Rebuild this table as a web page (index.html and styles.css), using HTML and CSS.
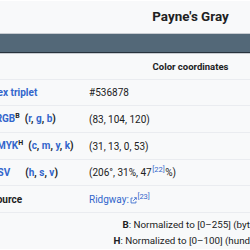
FILE: index.html
```html
<!DOCTYPE html>
<html lang="en">
<head>
<meta charset="utf-8">
<title>Payne's Gray</title>
<link rel="stylesheet" href="styles.css">
</head>
<body>
<div class="page">
  <div class="infobox">
    <div class="title">Payne's Gray</div>
    <div class="swatch"></div>
    <div class="head">Color coordinates</div>
    <div class="row">
      <div class="label"><a href="#">Hex triplet</a></div>
      <div class="value">#536878</div>
    </div>
    <div class="row tall">
      <div class="label"><a href="#">sRGB</a><sup class="note">B</sup>&nbsp;&nbsp;(<a href="#">r</a>, <a href="#">g</a>, <a href="#">b</a>)</div>
      <div class="value">(83, 104, 120)</div>
    </div>
    <div class="row tall">
      <div class="label"><a href="#">CMYK</a><sup class="note">H</sup>&nbsp;&nbsp;(<a href="#">c</a>, <a href="#">m</a>, <a href="#">y</a>, <a href="#">k</a>)</div>
      <div class="value">(31, 13, 0, 53)</div>
    </div>
    <div class="row">
      <div class="label"><a href="#">HSV</a>&nbsp;&nbsp;&nbsp;&nbsp;&nbsp;&nbsp;(<a href="#">h</a>, <a href="#">s</a>, <a href="#">v</a>)</div>
      <div class="value">(206°, 31%, 47<sup class="ref"><a href="#">[22]</a></sup>%)</div>
    </div>
    <div class="row tall">
      <div class="label">Source</div>
      <div class="value"><a href="#" class="ext">Ridgway:<svg class="ext-icon" viewBox="0 0 10 10" width="7" height="7" aria-hidden="true"><path d="M4 1.5H1.5v7h7V6" fill="none" stroke="#3366cc" stroke-width="1.2"/><path d="M6 1h3v3M9 1L4.5 5.5" fill="none" stroke="#3366cc" stroke-width="1.2"/></svg></a><sup class="ref"><a href="#">[23]</a></sup></div>
    </div>
    <div class="foot">
      <div><b>B</b>: Normalized to [0–255] (byte)</div>
      <div><b>H</b>: Normalized to [0–100] (hundred)</div>
    </div>
  </div>
</div>
</body>
</html>
```
FILE: styles.css
```css
html, body {
  margin: 0;
  padding: 0;
  overflow: hidden;
  background: #ffffff;
}
.page {
  width: 250px;
  height: 250px;
  overflow: hidden;
  padding-top: 1px;
  box-sizing: border-box;
}
.infobox {
  margin-left: -11px;
  width: 403px;
  background: #f8f9fa;
  color: #202122;
  font-family: Roboto, "Liberation Sans", sans-serif;
  font-size: 10px;
}
a {
  color: #3366cc;
  text-decoration: none;
}
.title {
  height: 32px;
  line-height: 32px;
  text-align: center;
  font-weight: bold;
  font-size: 13.4px;
  border-bottom: 1px solid #c8ccd1;
}
.swatch {
  height: 18px;
  background: #536878;
  border-bottom: 1px solid #27323c;
}
.head {
  height: 25px;
  line-height: 25px;
  text-align: center;
  font-weight: bold;
  font-size: 9.5px;
  border-top: 1px solid #c8ccd1;
}
.row {
  display: grid;
  grid-template-columns: 96px 1fr;
  align-items: center;
  height: 25px;
  border-top: 1px solid #eaecf0;
}
.row.tall {
  height: 26px;
}
.label {
  padding-left: 1.5px;
  font-weight: bold;
  white-space: nowrap;
}
.value {
  padding-left: 4px;
  white-space: nowrap;
}
sup {
  line-height: 1;
  vertical-align: super;
}
.note {
  font-size: 7px;
}
.ref {
  font-size: 7.5px;
  font-weight: normal;
  margin: 0 0.5px;
}
.ext-icon {
  margin-left: 1px;
  vertical-align: -1px;
}
.foot {
  border-top: 1px solid #eaecf0;
  padding-top: 4px;
  text-align: center;
  font-size: 9.8px;
  line-height: 16px;
  white-space: nowrap;
}
```
